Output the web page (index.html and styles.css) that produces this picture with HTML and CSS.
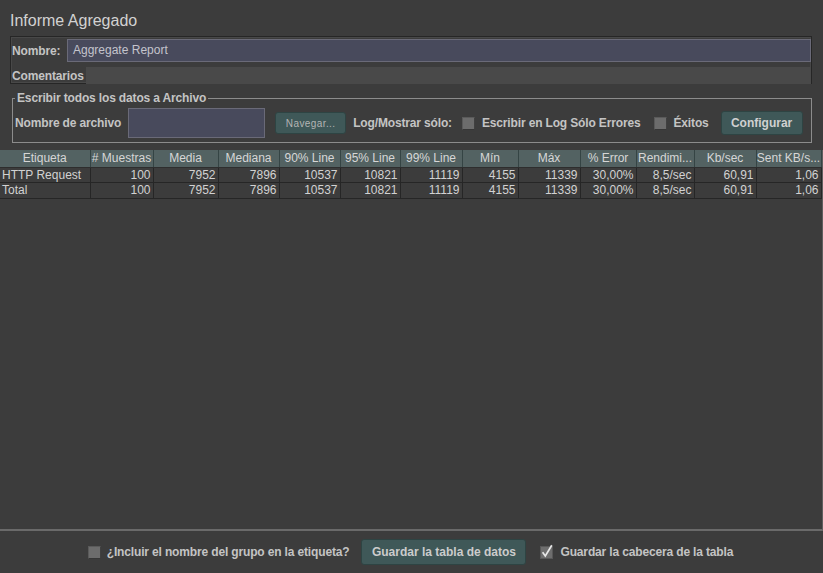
FILE: index.html
```html
<!DOCTYPE html>
<html lang="es">
<head>
<meta charset="utf-8">
<title>Informe Agregado</title>
<link rel="stylesheet" href="styles.css">
</head>
<body>
<div class="title">Informe Agregado</div>

<div class="name-panel">
  <div class="name-row">
    <span class="lbl">Nombre:</span>
    <div class="field name-field">Aggregate Report</div>
  </div>
  <div class="comment-row">
    <span class="lbl">Comentarios</span>
    <div class="comment-field"></div>
  </div>
</div>

<fieldset class="file-box">
  <legend class="lbl">Escribir todos los datos a Archivo</legend>
  <div class="file-row">
    <span class="lbl">Nombre de archivo</span>
    <div class="field file-field"></div>
    <button class="btn btn-small">Navegar...</button>
    <span class="lbl log-lbl">Log/Mostrar sólo:</span>
    <span class="cb"></span>
    <span class="lbl">Escribir en Log Sólo Errores</span>
    <span class="cb cb-gap"></span>
    <span class="lbl">Éxitos</span>
    <button class="btn btn-conf">Configurar</button>
  </div>
</fieldset>

<div class="pane">
  <table class="grid">
    <colgroup>
      <col class="w90"><col class="w63"><col class="w65"><col class="w61"><col class="w61"><col class="w60"><col class="w62"><col class="w56"><col class="w62"><col class="w56"><col class="w58"><col class="w62"><col class="w65">
    </colgroup>
    <thead>
      <tr>
        <th>Etiqueta</th><th># Muestras</th><th>Media</th><th>Mediana</th><th>90% Line</th><th>95% Line</th><th>99% Line</th><th>Mín</th><th>Máx</th><th>% Error</th><th>Rendimi...</th><th>Kb/sec</th><th>Sent KB/s...</th>
      </tr>
    </thead>
    <tbody>
      <tr>
        <td class="l">HTTP Request</td><td>100</td><td>7952</td><td>7896</td><td>10537</td><td>10821</td><td>11119</td><td>4155</td><td>11339</td><td>30,00%</td><td>8,5/sec</td><td>60,91</td><td>1,06</td>
      </tr>
      <tr>
        <td class="l">Total</td><td>100</td><td>7952</td><td>7896</td><td>10537</td><td>10821</td><td>11119</td><td>4155</td><td>11339</td><td>30,00%</td><td>8,5/sec</td><td>60,91</td><td>1,06</td>
      </tr>
    </tbody>
  </table>
</div>

<div class="bottom">
  <span class="cb"></span>
  <span class="lbl b-text">¿Incluir el nombre del grupo en la etiqueta?</span>
  <button class="btn btn-save">Guardar la tabla de datos</button>
  <span class="cb-checked">
    <svg width="14" height="15" viewBox="0 0 14 15"><rect x="0.5" y="2.5" width="12" height="12" fill="#6e6e6e" stroke="#585858"/><path d="M2.6 8.2 L5.3 12 L11.8 1.2" fill="none" stroke="#e8e8e8" stroke-width="1.7"/></svg>
  </span>
  <span class="lbl">Guardar la cabecera de la tabla</span>
</div>
</body>
</html>
```

FILE: styles.css
```css
* { box-sizing: border-box; }
html, body { margin: 0; }
body {
  width: 823px;
  height: 573px;
  overflow: hidden;
  background: #3c3c3c;
  font-family: "Liberation Sans", Arial, sans-serif;
  font-size: 12px;
  color: #c6c6c6;
  display: flex;
  flex-direction: column;
}
.title {
  height: 36px;
  padding: 10px 0 0 10px;
  font-size: 16px;
  line-height: 21px;
  color: #d2d2d2;
}
.lbl { font-weight: bold; color: #c4c4c4; white-space: nowrap; letter-spacing: -0.15px; }

.name-panel {
  margin: 0 11px 0 10px;
  height: 48px;
  border: 1px solid #262626;
  box-shadow: inset 0 0 0 1px #484848;
  display: flex;
  flex-direction: column;
  padding: 2px 0 0 1px;
}
.name-row { display: flex; align-items: center; height: 23px; }
.name-row .lbl { width: 55px; }
.field {
  border: 1px solid #6a6a78;
  background: #484a5c;
}
.name-field {
  flex: 1;
  height: 23px;
  padding-left: 5px;
  line-height: 21px;
  color: #c4c4cc;
  font-weight: normal;
}
.comment-row { display: flex; align-items: center; height: 17px; margin-top: 5px; }
.comment-row .lbl { width: 74px; }
.comment-field { flex: 1; height: 17px; background: #494949; }

.file-box {
  margin: 7px 11px 0 12px;
  padding: 3px 2px 2px 2px;
  border: 1px solid #8c8c8c;
  height: 52px;
  min-width: 0;
}
.file-box legend { padding: 0 2px; line-height: 14px; }
.file-row { display: flex; align-items: center; height: 30px; }
.file-field { width: 137px; height: 30px; margin-left: 7px; }
.btn {
  font-family: "Liberation Sans", Arial, sans-serif;
  border: 1px solid #2e4443;
  border-radius: 3px;
  background: #3f5858;
  color: #cccccc;
  padding: 0;
  white-space: nowrap;
}
.btn-small {
  width: 71px; height: 22px; margin-left: 10px;
  font-size: 10px; letter-spacing: 0.4px; color: #b4b4b4;
}
.log-lbl { margin-left: 7px; }
.cb {
  width: 13px; height: 13px;
  flex: none;
  margin: 0 7px 0 10px;
  border: 1px solid #5a5a5a;
  border-right-color: #404040;
  border-bottom-color: #363636;
  background: #6c6c6c;
}
.cb-gap { margin-left: 14px; margin-right: 6px; }
.btn-conf {
  width: 82px; height: 24px; margin-left: 12px;
  font-size: 12px; font-weight: bold; color: #d0d0d0;
}

.pane {
  margin-top: 7px;
  flex: 1;
  border-right: 1px solid #5e5e5e;
  border-bottom: 2px solid #6a6a6a;
  width: 823px;
}
.grid {
  border-collapse: collapse;
  table-layout: fixed;
  width: 821px;
}
.w90 { width: 90px; } .w63 { width: 63px; } .w65 { width: 65px; }
.w61 { width: 61px; } .w60 { width: 60px; } .w62 { width: 62px; }
.w56 { width: 56px; } .w58 { width: 58px; }
.grid th {
  height: 17px;
  padding: 0;
  font-weight: normal;
  color: #d6d6d6;
  text-align: center;
  white-space: nowrap;
  overflow: hidden;
  border-right: 1px solid #354444;
  border-bottom: 1px solid #2e2e2e;
  background: #536262;
}
.grid td {
  height: 15.5px;
  padding: 0 2px;
  text-align: right;
  color: #d2d2d2;
  white-space: nowrap;
  overflow: hidden;
  border-right: 1px solid #262626;
  border-bottom: 1px solid #262626;
  line-height: 14px;
}
.grid td.l { text-align: left; }

.bottom {
  height: 42px;
  flex: none;
  display: flex;
  align-items: center;
  justify-content: center;
  padding-right: 2px;
}
.bottom .cb { margin: 0 6px 0 0; }
.btn-save {
  width: 165px; height: 26px; margin: 0 14px 0 12px;
  font-size: 12px; font-weight: bold; color: #cccccc;
}
.cb-checked { display: flex; margin-right: 6px; margin-top: -2px; }
```
